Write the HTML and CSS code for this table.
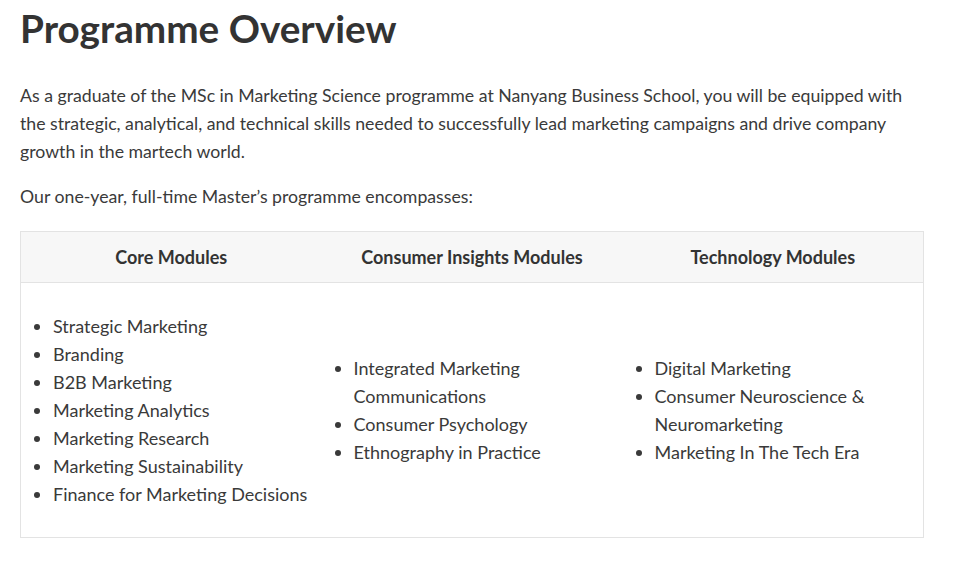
FILE: index.html
```html
<!DOCTYPE html>
<html lang="en">
<head>
  <meta charset="UTF-8" />
  <meta name="viewport" content="width=device-width, initial-scale=1.0" />
  <title>Programme Overview</title>
  <link rel="stylesheet" href="styles.css">
</head>
<body>
  <div class="page">
    <h1 class="title">Programme Overview</h1>

    <p class="intro">As a graduate of the MSc in Marketing Science programme at Nanyang Business School, you will be equipped with the strategic, analytical, and technical skills needed to successfully lead marketing campaigns and drive company growth in the martech world.</p>
    <p class="intro">Our one-year, full-time Master’s programme encompasses:</p>

    <table class="modules">
      <thead>
        <tr>
          <th>Core Modules</th>
          <th>Consumer Insights Modules</th>
          <th>Technology Modules</th>
        </tr>
      </thead>
      <tbody>
        <tr>
          <td>
            <ul>
              <li>Strategic Marketing</li>
              <li>Branding</li>
              <li>B2B Marketing</li>
              <li>Marketing Analytics</li>
              <li>Marketing Research</li>
              <li>Marketing Sustainability</li>
              <li>Finance for Marketing Decisions</li>
            </ul>
          </td>
          <td>
            <ul>
              <li>Integrated Marketing Communications</li>
              <li>Consumer Psychology</li>
              <li>Ethnography in Practice</li>
            </ul>
          </td>
          <td>
            <ul>
              <li>Digital Marketing</li>
              <li>Consumer Neuroscience &amp; Neuromarketing</li>
              <li>Marketing In The Tech Era</li>
            </ul>
          </td>
        </tr>
      </tbody>
    </table>
  </div>
</body>
</html>
```

FILE: styles.css
```css
* { box-sizing: border-box; margin: 0; padding: 0; }
body {
  background: #fff;
  color: #333;
  font-family: Lato, 'Open Sans', sans-serif;
}
.page {
  padding: 0 40px 0 20px;
}
.title {
  font-size: 38.7px;
  font-weight: 700;
  line-height: 56px;
  color: #333;
}
.intro {
  font-size: 17.7px;
  line-height: 28px;
  margin-top: 26px;
  color: #3a3a3a;
}
.intro + .intro {
  margin-top: 17px;
}
.modules {
  width: 904px;
  margin-top: 20px;
  border-collapse: collapse;
  border: 1px solid #e3e3e3;
  table-layout: fixed;
}
.modules th {
  background: #f7f7f7;
  border-bottom: 1px solid #e3e3e3;
  height: 51px;
  font-size: 18px;
  font-weight: 700;
  text-align: center;
  vertical-align: middle;
  padding-bottom: 1px;
}
.modules td {
  vertical-align: middle;
  padding: 29px 8px 29px 8px;
  font-size: 18px;
  line-height: 28px;
  color: #3a3a3a;
}
.modules ul {
  padding-left: 24px;
}
```
